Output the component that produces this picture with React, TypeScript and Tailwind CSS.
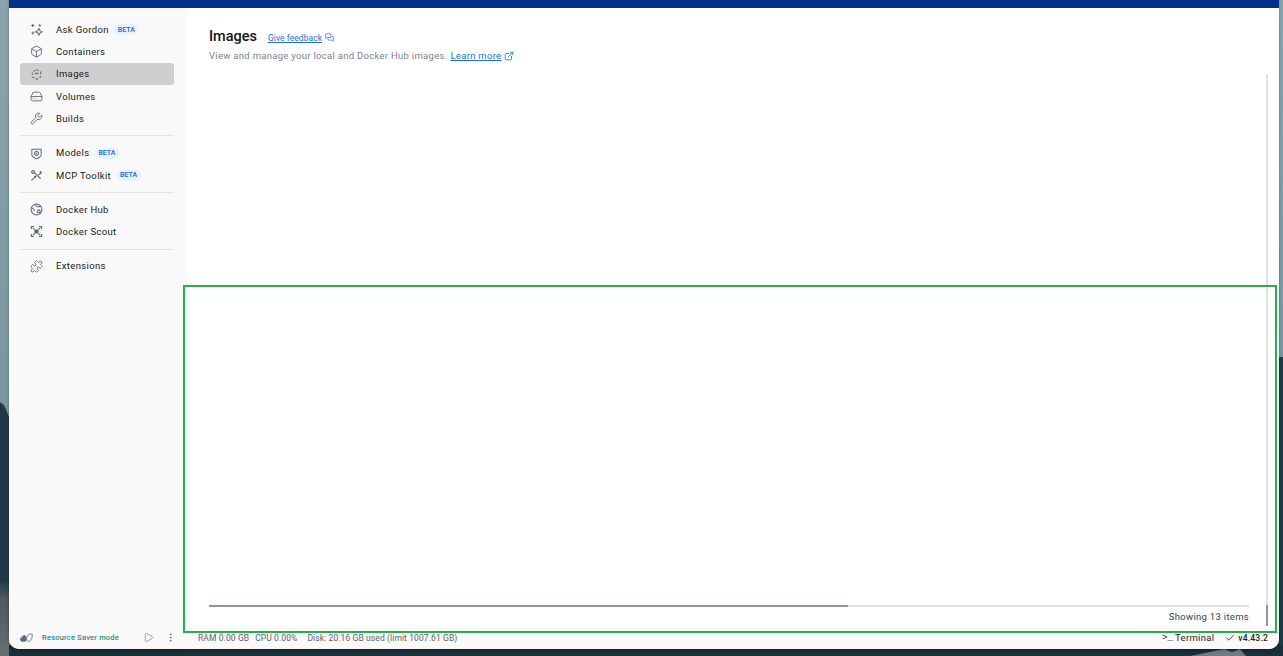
import {
  Box,
  Check,
  EllipsisVertical,
  ExternalLink,
  HardDrive,
  MessagesSquare,
  Play,
  Puzzle,
  Wrench,
} from "lucide-react";
import type { ReactNode } from "react";

const iconClass = "h-[13px] w-[13px] text-[#5f6b7c]";

function GordonIcon() {
  return (
    <svg viewBox="0 0 14 14" className={iconClass} fill="none" stroke="currentColor" strokeWidth="1.1">
      <path d="M3 1v3.200M1.400 2.600h3.200M10.500 1.300v2.600M9.200 2.600h2.600M3.200 9.200v3.200M1.600 10.800h3.200" />
      <path d="M9.600 6l1.200 2.300 2.300 1.200-2.300 1.200-1.200 2.300-1.200-2.300-2.300-1.200 2.300-1.200z" />
    </svg>
  );
}

function ImagesIcon() {
  return (
    <svg viewBox="0 0 14 14" className={iconClass} fill="none" stroke="currentColor" strokeWidth="1.1" strokeDasharray="2.600 2">
      <path d="M7 1.800l4.500 2.600v5.200L7 12.200 2.500 9.600V4.400z" />
      <path d="M7 5.400l1.800 1.100M7 5.400L5.200 6.500" strokeDasharray="none" />
    </svg>
  );
}

function ModelsIcon() {
  return (
    <svg viewBox="0 0 14 14" className={iconClass} fill="none" stroke="currentColor" strokeWidth="1.1">
      <path d="M2 2.500h10v6.200c0 1.400-3.200 3.500-5 4.100-1.800-.6-5-2.700-5-4.100z" />
      <path d="M7 4.600l2 1.200v2.300l-2 1.200-2-1.200V5.800z" />
      <circle cx="7" cy="7" r=".7" fill="currentColor" stroke="none" />
    </svg>
  );
}

function McpIcon() {
  return (
    <svg viewBox="0 0 14 14" className={iconClass} fill="none" stroke="currentColor" strokeWidth="1.200">
      <path d="M1.500 12.500l4-4M4 3l7.500 7.500M12.500 4L9 6.500" />
      <circle cx="3.300" cy="3.300" r="1.500" />
      <path d="M5 7.500L6.500 9" strokeWidth="2.400" />
      <path d="M10.500 2.500L12.300 4" strokeWidth="1.600" />
    </svg>
  );
}

function HubIcon() {
  return (
    <svg viewBox="0 0 14 14" className={iconClass} fill="none" stroke="currentColor" strokeWidth="1.100">
      <circle cx="7" cy="7" r="5.800" />
      <path d="M1.800 5.500c2 .4 2.700 1.300 2.800 3.300M6.500 1.300C5.800 3.300 7.400 4.700 9.800 3.900l2.200-.1" />
      <circle cx="9.300" cy="9" r="1.600" />
    </svg>
  );
}

function ScoutIcon() {
  return (
    <svg viewBox="0 0 14 14" className={iconClass} fill="none" stroke="currentColor" strokeWidth="1.300">
      <circle cx="7" cy="7" r="2.500" fill="currentColor" stroke="none" />
      <path d="M1.500 4.300V1.800h2.700M12.500 4.300V1.800H9.800M1.500 9.700v2.500h2.700M12.500 9.700v2.500H9.800" />
      <path d="M3.500 3.500l1.300 1.300M10.500 3.500L9.200 4.800M3.500 10.500l1.300-1.300M10.500 10.500L9.200 9.200" />
    </svg>
  );
}

function SaverIcon() {
  return (
    <svg viewBox="0 0 16 12" className="h-[11px] w-[13px] text-[#5f6b7c]">
      <path d="M0 6.500h2V4.600h2V2.800h2.200v1.800h1.500v5.200c0 1-.8 1.500-1.800 1.500H3C1 11.300 0 9 0 6.500z" fill="currentColor" />
      <path d="M9 3.800c1.600-2 4-2.300 6-2.200.3 3.400-.4 7.500-3.200 9-2 .8-3.700-.6-3.700-2.600 0-1.700.3-3 .9-4.200z" fill="none" stroke="currentColor" strokeWidth="1" />
    </svg>
  );
}

function Beta() {
  return (
    <span className="rounded-full bg-[#e5f2fc] px-[3.500px] py-[1.500px] text-[7px] font-medium leading-[8px] text-[#1d63d8]">
      BETA
    </span>
  );
}

function NavItem({ icon, label, beta, active }: { icon: ReactNode; label: string; beta?: boolean; active?: boolean }) {
  return (
    <div className={`flex h-[22.300px] items-center rounded-[3px] pl-[10px] ${active ? "bg-[#cfcfcf]" : ""}`}>
      <span className="flex w-[26px] shrink-0">{icon}</span>
      <span className="text-[9.500px] leading-none tracking-[0.35px] text-[#17191c]">{label}</span>
      {beta && <span className="ml-[5.500px] flex"><Beta /></span>}
    </div>
  );
}

function Divider() {
  return <div className="my-[5.500px] h-px bg-[#e3e3e3]" />;
}

// desktop wallpaper behind the app window
function Wallpaper() {
  return (
    <svg className="absolute inset-0" width="1283" height="656" viewBox="0 0 1283 656" preserveAspectRatio="none">
      <defs>
        <linearGradient id="sky" x1="0" y1="0" x2="0" y2="1">
          <stop offset="0" stopColor="#8aa4ad" />
          <stop offset="1" stopColor="#6f8d97" />
        </linearGradient>
        <linearGradient id="foot" x1="0" y1="0" x2="0" y2="1">
          <stop offset="0" stopColor="#1f3946" />
          <stop offset="0.25" stopColor="#4f5a5f" />
          <stop offset="1" stopColor="#666e71" />
        </linearGradient>
      </defs>
      <rect width="1283" height="656" fill="url(#sky)" />
      <path d="M0 402l4 3 5 12V656H0z" fill="#1f3946" />
      <path d="M0 580h9v76H0z" fill="url(#foot)" />
      <path d="M1275 357h8v299h-8z" fill="#1d3a47" />
      <path d="M9 645h1274v11H9z" fill="#1a2f3a" />
      <path d="M1190 656l20-4 14-3 8 3 8-3 6 7z" fill="#6f7b80" />
    </svg>
  );
}

export default function App() {
  return (
    <div className="relative h-[656px] w-[1283px] overflow-hidden font-['Roboto',sans-serif]">
      <Wallpaper />

      {/* app window */}
      <div className="relative ml-[9px] flex h-[649px] w-[1270px] flex-col overflow-hidden rounded-b-[10px] bg-[#fafafa] shadow-[0_1px_3px_rgba(0,0,0,0.35)]">
        <div className="h-[8px] shrink-0 bg-[#00308a]" />

        <div className="flex min-h-0 flex-1">
          {/* sidebar */}
          <aside className="flex w-[178px] shrink-0 flex-col bg-[#f9f9f9]">
            <nav className="pl-[11px] pr-[13px] pt-[10.400px]">
              <NavItem icon={<GordonIcon />} label="Ask Gordon" beta />
              <NavItem icon={<Box className={iconClass} strokeWidth={1.7} />} label="Containers" />
              <NavItem icon={<ImagesIcon />} label="Images" active />
              <NavItem icon={<HardDrive className={iconClass} strokeWidth={1.7} />} label="Volumes" />
              <NavItem icon={<Wrench className={iconClass} strokeWidth={1.7} />} label="Builds" />
              <Divider />
              <NavItem icon={<ModelsIcon />} label="Models" beta />
              <NavItem icon={<McpIcon />} label="MCP Toolkit" beta />
              <Divider />
              <NavItem icon={<HubIcon />} label="Docker Hub" />
              <NavItem icon={<ScoutIcon />} label="Docker Scout" />
              <Divider />
              <NavItem icon={<Puzzle className={iconClass} strokeWidth={1.7} />} label="Extensions" />
            </nav>

            <div className="mt-auto flex h-[21px] items-center pb-[2px] pl-[11px]">
              <SaverIcon />
              <span className="ml-[9px] text-[7.500px] font-medium tracking-[0.2px] text-[#2a8a83]">Resource Saver mode</span>
              <Play className="ml-[24px] h-[11px] w-[11px] text-[#6d7a8c]" strokeWidth={1.5} />
              <EllipsisVertical className="ml-[11px] h-[11px] w-[11px] text-[#5f6b7c]" strokeWidth={2} />
            </div>
          </aside>

          {/* main column */}
          <div className="flex min-w-0 flex-1 flex-col">
            <main className="flex min-h-0 flex-1 flex-col bg-white">
              <div className="pl-[22px] pt-[20px]">
                <div className="flex items-baseline">
                  <h1 className="text-[14.500px] font-medium leading-[18px] text-[#121417]">Images</h1>
                  <a className="ml-[11px] text-[8.500px] tracking-[0.05px] text-[#1d6fe0] underline">Give feedback</a>
                  <MessagesSquare className="ml-[3px] h-[9px] w-[9px] self-center text-[#1d6fe0]" strokeWidth={2} />
                </div>
                <p className="mt-[3.500px] flex items-center text-[9.500px] leading-[12px] tracking-[0.29px] text-[#7a8492]">
                  View and manage your local and Docker Hub images.
                  <a className="ml-[3px] text-[#1d6fe0] underline">Learn more</a>
                  <ExternalLink className="ml-[3px] h-[10px] w-[10px] text-[#1d6fe0]" strokeWidth={2} />
                </p>
              </div>

              <div className="flex min-h-0 flex-1 pt-[12px]">
                <div className="flex min-w-0 flex-1 flex-col pl-[22px] pr-[17px]">
                  <div className="flex-1" />
                  <div className="h-[2px] bg-[#e0e0e0]">
                    <div className="h-full w-[639px] bg-[#8a95a8]" />
                  </div>
                  <div className="flex h-[21px] items-center justify-end text-[9.500px] tracking-[0.3px] text-[#3c4148]">
                    Showing 13 items
                  </div>
                </div>
                <div className="mb-[2px] mr-[11px] flex w-[2px] flex-col justify-end bg-[#e0e0e0]">
                  <div className="h-[21px] bg-[#8a95a8]" />
                </div>
              </div>
            </main>

            {/* status bar */}
            <footer className="flex h-[21px] shrink-0 items-center bg-[#fafafa] pb-[1px] pl-[11px] pr-[11px] text-[8.500px] tracking-[0.1px] text-[#5c6168]">
              <span>RAM 0.00 GB</span>
              <span className="ml-[6px]">CPU 0.00%</span>
              <span className="ml-[10px]">Disk: 20.16 GB used (limit 1007.61 GB)</span>
              <span className="ml-auto font-['Liberation_Mono',monospace] text-[9px] leading-none text-[#1c1e21]">&gt;_</span>
              <span className="ml-[2px] text-[9.500px] tracking-[0.3px] text-[#1c1e21]">Terminal</span>
              <Check className="ml-[11px] h-[10px] w-[10px] text-[#1c1e21]" strokeWidth={2} />
              <span className="ml-[3px] font-medium tracking-[0.2px] text-[#1c1e21]">v4.43.2</span>
            </footer>
          </div>
        </div>
      </div>

      {/* green selection marker over the shot */}
      <div className="absolute left-[183px] top-[285px] h-[348px] w-[1094px] border-2 border-[#22b14c]" />
    </div>
  );
}
